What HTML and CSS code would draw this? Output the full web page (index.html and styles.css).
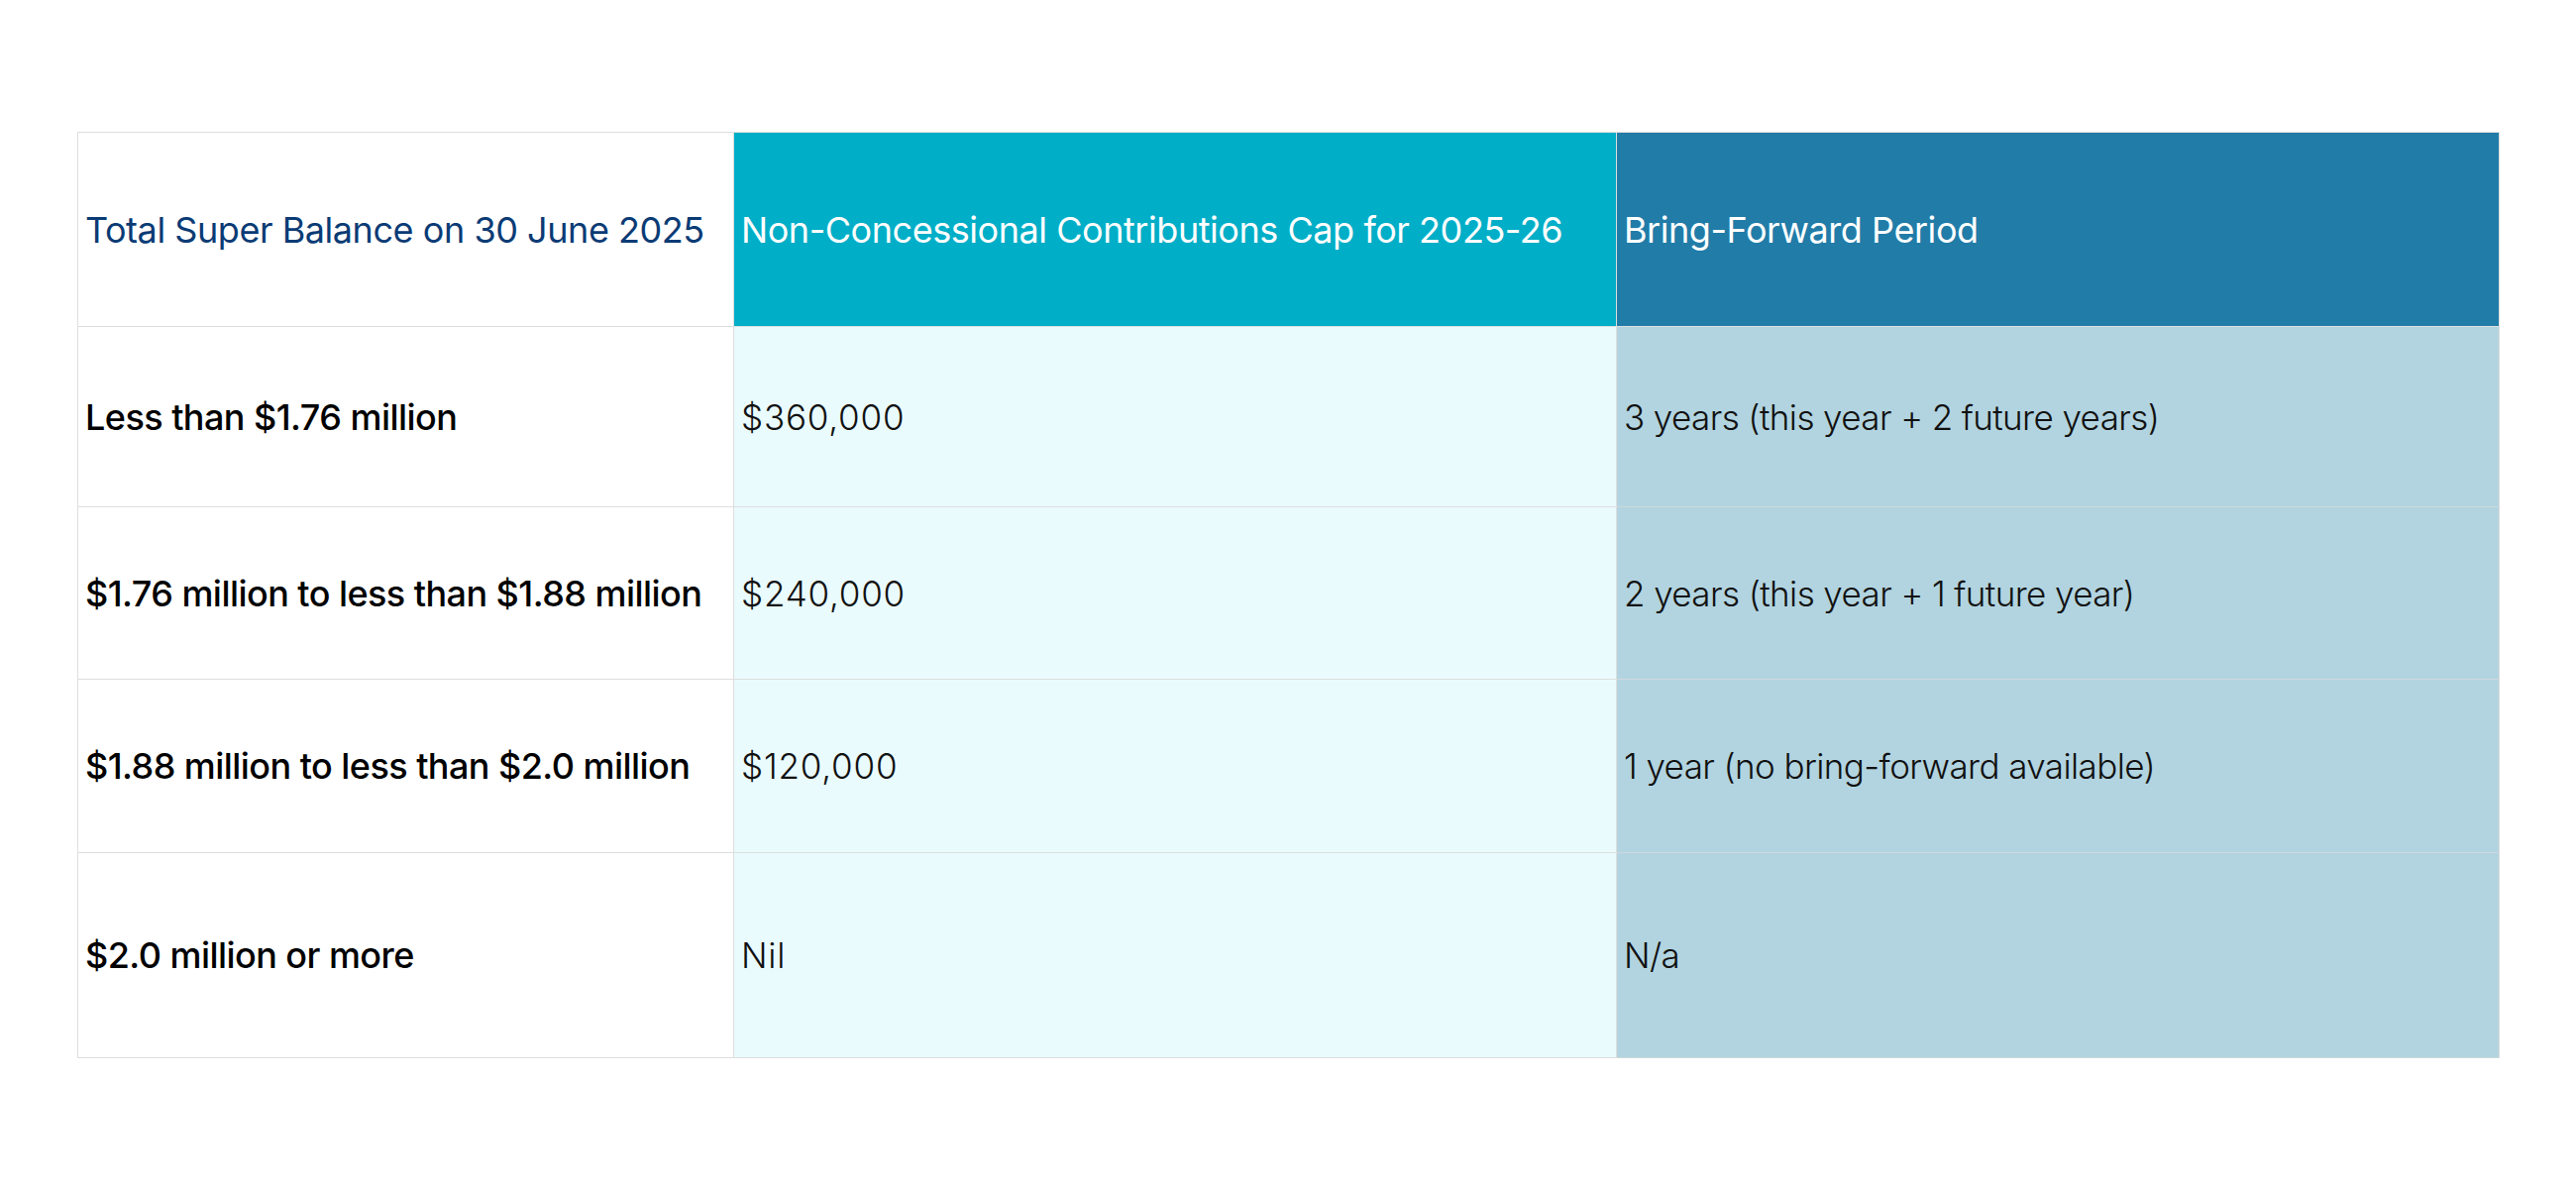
FILE: index.html
```html
<!DOCTYPE html>
<html lang="en">
<head>
<meta charset="utf-8">
<title>Non-Concessional Contributions Cap</title>
<link rel="stylesheet" href="styles.css">
</head>
<body>
<main class="page">
  <table class="cap-table">
    <colgroup>
      <col class="c1">
      <col class="c2">
      <col class="c3">
    </colgroup>
    <thead>
      <tr class="row-head">
        <th class="h1">Total Super Balance on 30 June 2025</th>
        <th class="h2">Non-Concessional Contributions Cap for 2025-26</th>
        <th class="h3">Bring-Forward Period</th>
      </tr>
    </thead>
    <tbody>
      <tr class="row-a">
        <td class="d1">Less than $1.76 million</td>
        <td class="d2">$360,000</td>
        <td class="d3">3 years (this year + 2 future years)</td>
      </tr>
      <tr class="row-b">
        <td class="d1">$1.76 million to less than $1.88 million</td>
        <td class="d2">$240,000</td>
        <td class="d3">2 years (this year + 1 future year)</td>
      </tr>
      <tr class="row-c">
        <td class="d1">$1.88 million to less than $2.0 million</td>
        <td class="d2">$120,000</td>
        <td class="d3">1 year (no bring-forward available)</td>
      </tr>
      <tr class="row-d">
        <td class="d1">$2.0 million or more</td>
        <td class="d2">Nil</td>
        <td class="d3">N/a</td>
      </tr>
    </tbody>
  </table>
</main>
</body>
</html>
```

FILE: styles.css
```css
html, body {
  margin: 0;
  padding: 0;
  background: #ffffff;
}

.page {
  padding: 133px 0 0 78px;
  font-family: "Inter", "Liberation Sans", sans-serif;
}

.cap-table {
  border-collapse: collapse;
  table-layout: fixed;
  width: 2444px;
}

.c1 { width: 662px; }
.c2 { width: 891px; }
.c3 { width: 891px; }

.cap-table th,
.cap-table td {
  border: 1px solid #dedede;
  padding: 0 7px;
  text-align: left;
  vertical-align: middle;
  white-space: nowrap;
}

.cap-table th {
  font-size: 36px;
  font-weight: 400;
  letter-spacing: -0.45px;
}

.h1 {
  background: #ffffff;
  color: #0a3b75;
}

.h2 {
  background: #00aec7;
  color: #ffffff;
}

.h3 {
  background: #217ca8;
  color: #ffffff;
  border-left-color: #8cc4d8 !important;
}

.d1 {
  background: #ffffff;
  color: #000000;
  font-size: 36px;
  font-weight: 500;
  letter-spacing: -0.55px;
}

.d2 {
  background: #eafbfd;
  color: #111111;
  font-size: 35px;
  font-weight: 300;
  letter-spacing: 0.8px;
}

.d3 {
  background: #b2d4e0;
  color: #111111;
  font-size: 35px;
  font-weight: 300;
  letter-spacing: -0.6px;
  border-top-color: #cfd8dc !important;
  border-bottom-color: #cfd8dc !important;
}

.row-head th { height: 195px; }
.row-a td { height: 181px; }
.row-b td { height: 173px; }
.row-c td { height: 174px; }
.row-d td { height: 206px; }
```
